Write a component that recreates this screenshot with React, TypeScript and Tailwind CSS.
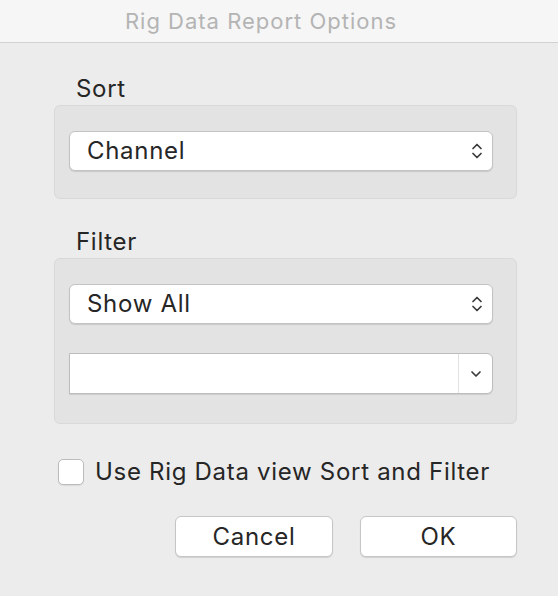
import React from "react";

const font = { fontFamily: 'Inter, "Liberation Sans", Arial, sans-serif' };

function UpDown() {
  return (
    <svg width="12" height="18" viewBox="0 0 12 18" fill="none" stroke="#3a3a3a" strokeWidth="1.7" strokeLinecap="round" strokeLinejoin="round">
      <path d="M2 6.5 L6 2.5 L10 6.5" />
      <path d="M2 11.5 L6 15.5 L10 11.5" />
    </svg>
  );
}

function Down() {
  return (
    <svg width="12" height="8" viewBox="0 0 12 8" fill="none" stroke="#3a3a3a" strokeWidth="1.7" strokeLinecap="round" strokeLinejoin="round">
      <path d="M2 2 L6 6 L10 2" />
    </svg>
  );
}

function Popup({ label }: { label: string }) {
  return (
    <div className="flex h-[40px] w-[424px] items-center justify-between rounded-[6px] border border-[#c3c3c3] bg-white pl-[17px] pr-[9px] shadow-[0_1px_1px_rgba(0,0,0,0.12)]">
      <span className="text-[24px] leading-none tracking-[0.7px] text-[#262626]">{label}</span>
      <UpDown />
    </div>
  );
}

export default function App() {
  return (
    <div className="h-[596px] w-[558px] overflow-hidden bg-[#ececec]" style={font}>
      <div className="flex h-[43px] items-center justify-center border-b border-[#d2d2d2] bg-[#f6f6f6] pr-[36px]">
        <span className="text-[22px] tracking-[1px] text-[#b4b4b4]">Rig Data Report Options</span>
      </div>

      <div className="pl-[76px] pt-[33px] text-[24px] leading-[26px] tracking-[0.7px] text-[#262626]">Sort</div>
      <div className="ml-[54px] mt-[3px] h-[94px] w-[463px] rounded-[6px] border border-[#d9d9d9] bg-[#e3e3e3] pl-[14px] pt-[25px]">
        <Popup label="Channel" />
      </div>

      <div className="pl-[76px] pt-[30px] text-[24px] leading-[26px] tracking-[0.7px] text-[#262626]">Filter</div>
      <div className="ml-[54px] mt-[3px] h-[166px] w-[463px] rounded-[6px] border border-[#d9d9d9] bg-[#e3e3e3] pl-[14px] pt-[25px]">
        <Popup label="Show All" />
        <div className="mt-[29px] flex h-[41px] w-[424px] overflow-hidden rounded-r-[6px] border border-[#bdbdbd] bg-white shadow-[0_1px_1px_rgba(0,0,0,0.1)]">
          <div className="flex-1" />
          <div className="flex w-[34px] items-center justify-center border-l border-[#e2e2e2]">
            <Down />
          </div>
        </div>
      </div>

      <div className="ml-[58px] mt-[35px] flex items-center">
        <div className="h-[26px] w-[26px] rounded-[5px] border border-[#bcbcbc] bg-white shadow-[0_1px_1px_rgba(0,0,0,0.08)]" />
        <span className="ml-[11px] text-[24px] leading-none tracking-[0.7px] text-[#262626]">Use Rig Data view Sort and Filter</span>
      </div>

      <div className="mt-[31px] flex justify-end gap-[27px] pr-[41px]">
        <div className="flex h-[41px] w-[158px] items-center justify-center rounded-[6px] border border-[#c6c6c6] bg-white text-[24px] tracking-[0.7px] text-[#262626] shadow-[0_1px_1px_rgba(0,0,0,0.12)]">Cancel</div>
        <div className="flex h-[41px] w-[157px] items-center justify-center rounded-[6px] border border-[#c6c6c6] bg-white text-[24px] tracking-[0.7px] text-[#262626] shadow-[0_1px_1px_rgba(0,0,0,0.12)]">OK</div>
      </div>
    </div>
  );
}
